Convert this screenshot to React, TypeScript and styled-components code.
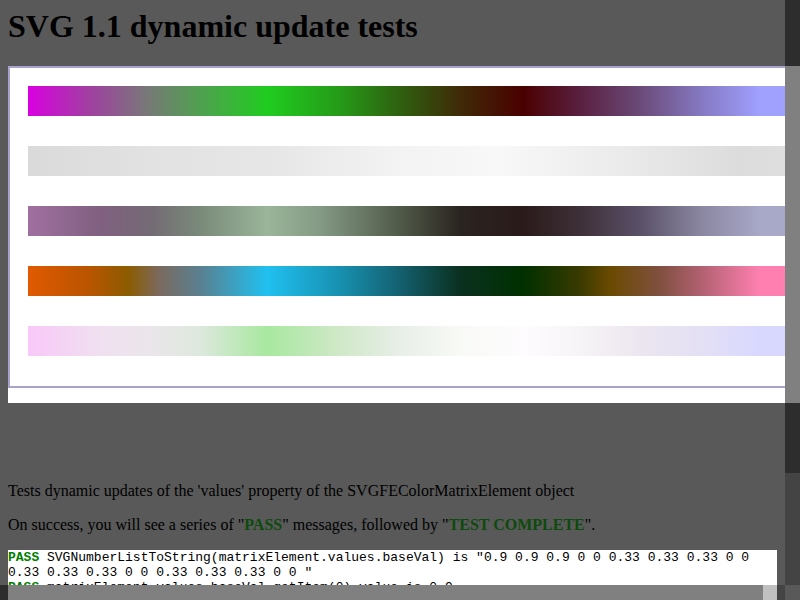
import styled, { createGlobalStyle } from "styled-components"

const GlobalStyle = createGlobalStyle`
  html, body {
    margin: 0;
    padding: 0;
    background: #595959;
  }
  #root {
    width: 800px;
    height: 600px;
  }
`

// colour stops sampled from the filtered gradients, in px from the bar's left edge
const bars: Array<Array<[string, number]>> = [
	[["#d800e0", 0], ["#a040a0", 62], ["#787878", 119], ["#50a050", 172], ["#20cc20", 239], ["#259a18", 312], ["#2f6010", 372], ["#3f2a08", 432], ["#4a0000", 495], ["#5a2040", 552], ["#6a4a78", 612], ["#8478c0", 672], ["#a0a0ff", 732]],
	[["#dadada", 0], ["#e2e2e2", 122], ["#e6e6e6", 239], ["#f3f3f3", 372], ["#f8f8f8", 470], ["#ededed", 572], ["#dcdcdc", 712], ["#dedede", 757]],
	[["#a070a0", 0], ["#806080", 72], ["#746a74", 122], ["#7a8a7a", 172], ["#9ab59a", 239], ["#849a84", 292], ["#505a48", 372], ["#2a2420", 432], ["#2a1a1a", 495], ["#3e3038", 552], ["#5a5068", 612], ["#8a86a0", 672], ["#a8a8c8", 732]],
	[["#e05a00", 0], ["#b85400", 62], ["#8c5c00", 100], ["#7a6a60", 132], ["#5a8090", 172], ["#20c0f0", 239], ["#1890b0", 312], ["#146070", 372], ["#0a3020", 432], ["#003000", 495], ["#3a3a00", 552], ["#6a4a00", 582], ["#805040", 632], ["#b06070", 672], ["#ff80b0", 732]],
	[["#f8c8f8", 0], ["#f0e0f0", 72], ["#ebe6eb", 122], ["#dde8dd", 172], ["#a8e8a0", 239], ["#d0e8c8", 312], ["#e8eee8", 372], ["#f8faf6", 432], ["#fefcfe", 495], ["#f6f4f6", 552], ["#ece6f0", 612], ["#e4e0f4", 672], ["#d8d8ff", 732]],
]

const Screen = styled.div`
  display: flex;
  width: 800px;
  height: 600px;
  overflow: hidden;
`

const MainColumn = styled.div`
  display: flex;
  flex-direction: column;
  width: 785px;
`

const Viewport = styled.div`
  flex: 1;
  overflow: hidden;
  padding: 8px 0 0 8px;
  background: #595959;
  font-family: "Liberation Serif", "Times New Roman", serif;
  color: #000;
`

const Title = styled.h1`
  margin: 0 0 21px;
  font-size: 32px;
  font-weight: bold;
  line-height: 37px;
`

const Panel = styled.div`
  width: 777px;
  height: 337px;
  overflow: hidden;
  background: #fff;
  margin-bottom: 79px;
`

const Frame = styled.div`
  width: 820px;
  height: 322px;
  border: 2px solid #a6a3cc;
  border-right: none;
  padding: 18px 0 0 18px;
  box-sizing: border-box;
  display: flex;
  flex-direction: column;
  gap: 30px;
`

const Bar = styled.div`
  width: 780px;
  height: 30px;
  flex: none;
`

const Para = styled.p`
  margin: 16px 0;
  font-size: 16px;
  line-height: 18px;
`

const Strong = styled.b<{ $dim?: boolean }>`
  color: ${({ $dim }) => ($dim ? "#0d4a0d" : "#008000")};
`

const Console = styled.pre`
  margin: 16px 8px 0 0;
  background: #fff;
  font-family: "Liberation Mono", "Courier New", monospace;
  font-size: 13px;
  line-height: 15px;
  white-space: pre-wrap;
  color: #000;
  height: 60px;
`

const HScroll = styled.div`
  display: flex;
  height: 15px;
  flex: none;
`

const Seg = styled.div<{ $w?: number; $c: string }>`
  background: ${({ $c }) => $c};
  ${({ $w }) => ($w ? `width: ${$w}px; flex: none;` : "flex: 1;")}
`

const VScroll = styled.div`
  display: flex;
  flex-direction: column;
  width: 15px;
`

const VSeg = styled.div<{ $h?: number; $c: string }>`
  background: ${({ $c }) => $c};
  ${({ $h }) => ($h ? `height: ${$h}px; flex: none;` : "flex: 1;")}
`

const gradient = (stops: Array<[string, number]>) =>
	`linear-gradient(to right, ${stops.map(([c, p]) => `${c} ${p}px`).join(", ")})`

export default function App() {
	return (
		<>
			<GlobalStyle />
			<Screen>
				<MainColumn>
					<Viewport>
						<Title>SVG 1.1 dynamic update tests</Title>
						<Panel>
							<Frame>
								{bars.map((stops, i) => (
									<Bar key={i} style={{ background: gradient(stops) }} />
								))}
							</Frame>
						</Panel>
						<Para>Tests dynamic updates of the 'values' property of the SVGFEColorMatrixElement object</Para>
						<Para>
							On success, you will see a series of "<Strong $dim>PASS</Strong>" messages, followed by "<Strong $dim>TEST COMPLETE</Strong>".
						</Para>
						<Console>
							<Strong>PASS</Strong> SVGNumberListToString(matrixElement.values.baseVal) is "0.9 0.9 0.9 0 0 0.33 0.33 0.33 0 0 0.33 0.33 0.33 0 0 0.33 0.33 0.33 0 0 "{"\n"}
							<Strong>PASS</Strong> matrixElement.values.baseVal.getItem(0).value is 0.9
						</Console>
					</Viewport>
					<HScroll>
						<Seg $w={8} $c="#2d2d2d" />
						<Seg $c="#808080" />
						<Seg $w={14} $c="#c0c0c0" />
						<Seg $w={8} $c="#444444" />
					</HScroll>
				</MainColumn>
				<VScroll>
					<VSeg $h={66} $c="#2d2d2d" />
					<VSeg $h={337} $c="#808080" />
					<VSeg $h={70} $c="#2d2d2d" />
					<VSeg $h={112} $c="#444444" />
					<VSeg $c="#595959" />
				</VScroll>
			</Screen>
		</>
	)
}
